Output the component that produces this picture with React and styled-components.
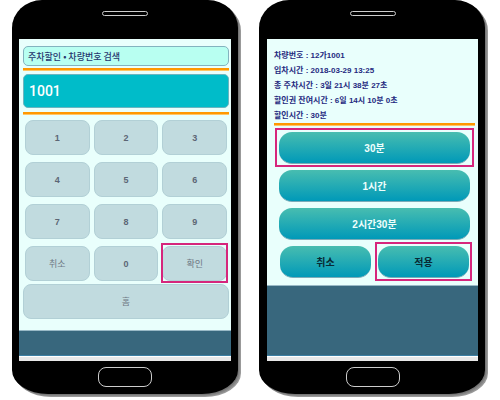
import React, { useState } from "react";
import styled, { createGlobalStyle, css } from "styled-components";

const GlobalStyle = createGlobalStyle`
  *, *::before, *::after { box-sizing: border-box; }
  body {
    margin: 0;
    background: #fff;
    font-family: "Liberation Sans", "Noto Sans CJK KR", sans-serif;
  }
  button, input { font: inherit; margin: 0; }
`;

const Phones = styled.main`
  display: grid;
  grid-template-columns: 1fr 1fr;
  align-items: stretch;
  gap: 21px;
  padding: 0 15px 6px 12px;
`;

const Phone = styled.section`
  display: flex;
  flex-direction: column;
  padding: 0 ${(p) => p.$right}px 0 ${(p) => p.$left}px;
  background: #000;
  border-radius: 30px 30px 36px 36px / 28px 28px 24px 24px;
  box-shadow: 1px 1px 0 #777, 2px 2px 0 #888, 3px 3px 0 #999;
`;

const Bezel = styled.div`
  display: flex;
  justify-content: center;
  align-items: flex-start;
  height: ${(p) => p.$height}px;
  padding: ${(p) => p.$pad};
`;

const Speaker = styled.span`
  width: 46px;
  height: 5px;
  border: 1px solid #ccc;
  border-radius: 3px;
`;

const HomeKey = styled.button`
  width: 54px;
  height: 20px;
  padding: 0;
  background: #000;
  border: 1px solid #ccc;
  border-radius: 8px;
`;

const Screen = styled.div`
  display: flex;
  flex: 1;
  flex-direction: column;
  background: #e9fffc;
`;

const Content = styled.div`
  display: flex;
  flex-direction: column;
  padding: ${(p) => p.$pad};
`;

const Title = styled.h1`
  margin: 0;
  padding: 0 4px;
  height: 20px;
  font-size: 9px;
  line-height: 19px;
  font-weight: 500;
  font-family: "Noto Sans CJK KR", sans-serif;
  color: #27366e;
  background: #b8fff1;
  border: 1px solid #83b3bf;
  border-radius: 5px;
  white-space: nowrap;
`;

const Rule = styled.hr`
  width: 100%;
  height: 3px;
  margin: ${(p) => p.$margin};
  border: 0;
  background: #ff9800;
  border-bottom: 1px solid #ffc565;
`;

const Display = styled.input`
  width: 100%;
  height: 34px;
  padding: 0 5px;
  color: #fff;
  font-family: Roboto, sans-serif;
  font-size: 14px;
  font-weight: 500;
  background: #00bcc9;
  border: 1px solid #6ab5c0;
  border-radius: 5px;
`;

const marker = css`
  position: relative;
  &::after {
    content: "";
    position: absolute;
    inset: ${(p) => p.$mark};
    border: 2px solid #d6267c;
    pointer-events: none;
  }
`;

const Keypad = styled.div`
  display: grid;
  grid-template-columns: repeat(3, 1fr);
  gap: 7px 4px;
  padding: 0 2px;
`;

const Key = styled.button`
  height: 35px;
  padding: 0;
  color: ${(p) => (p.$word ? "#6f7984" : "#5c6675")};
  font-size: 9px;
  font-weight: ${(p) => (p.$word ? 400 : 700)};
  background: #c1dbdf;
  border: 1px solid #b2d0d6;
  border-radius: 8px;
  ${(p) => p.$mark && marker}
`;

const HomeButton = styled(Key)`
  margin-top: 3px;
`;

const Details = styled.ul`
  margin: 0;
  padding: 0;
  list-style: none;
  color: #252a80;
  font-family: "Liberation Sans Narrow", "Liberation Sans", "Noto Sans CJK KR", sans-serif;
  font-size: 8px;
  font-weight: 700;
  line-height: 15px;
  white-space: nowrap;
`;

const Choices = styled.div`
  display: flex;
  flex-direction: column;
  gap: 6px;
  padding: 0 5px;
`;

const Actions = styled.div`
  display: grid;
  grid-template-columns: 1fr 1fr;
  gap: 7px;
  padding: 0 1px;
`;

const Pill = styled.button`
  height: 32px;
  padding: 0;
  color: ${(p) => (p.$dark ? "#082a35" : "#effffd")};
  font-size: 10px;
  font-weight: 700;
  background: linear-gradient(#48bdb0, #0099b8);
  border: 0;
  border-bottom: 1px solid #7aabb8;
  border-radius: 13px;
  ${(p) => p.$mark && marker}
`;

const Footer = styled.footer`
  flex: 1;
  min-height: 26px;
  background: #38677d;
  border-top: 1px solid #99b9c6;
  border-bottom: 1px solid #3d80a4;
`;

const Strip = styled.div`
  height: 5px;
  background: #e8e8e8;
  border-top: 1px solid #fff;
`;

const digits = ["1", "2", "3", "4", "5", "6", "7", "8", "9"];
const details = [
  "차량번호 : 12가1001",
  "입차시간 : 2018-03-29 13:25",
  "총 주차시간 : 3일 21시 38분 27초",
  "할인권 잔여시간 : 6일 14시 10분 0초",
  "할인시간 : 30분",
];

function Device({ label, left, right, children }) {
  return (
    <Phone aria-label={label} $left={left} $right={right}>
      <Bezel $height={39} $pad="11px 0 0">
        <Speaker />
      </Bezel>
      <Screen>
        {children}
        <Footer />
        <Strip />
      </Screen>
      <Bezel $height={33} $pad="6px 0 0">
        <HomeKey aria-label="홈" />
      </Bezel>
    </Phone>
  );
}

export default function App() {
  const [number, setNumber] = useState("1001");
  return (
    <>
      <GlobalStyle />
      <Phones>
        <Device label="차량번호 검색" left={7} right={7}>
          <Content $pad="7px 2px 11px 4px">
            <Title>주차할인 • 차량번호 검색</Title>
            <Rule $margin="2px 0 3px" />
            <Display
              aria-label="차량번호"
              value={number}
              onChange={(e) => setNumber(e.target.value)}
            />
            <Rule $margin="4px 0 5px" />
            <Keypad>
              {digits.map((d) => (
                <Key key={d} onClick={() => setNumber(number + d)}>{d}</Key>
              ))}
              <Key $word onClick={() => setNumber("")}>취소</Key>
              <Key onClick={() => setNumber(number + "0")}>0</Key>
              <Key $word $mark="-4px -2px -3px -2px">확인</Key>
            </Keypad>
            <HomeButton $word>홈</HomeButton>
          </Content>
        </Device>
        <Device label="할인 적용" left={8} right={7}>
          <Content $pad="9px 3px 7px 7px">
            <Details>
              {details.map((line) => (
                <li key={line}>{line}</li>
              ))}
            </Details>
            <Rule $margin="0 0 6px" />
            <Choices>
              <Pill $mark="-4px -4px -4px -4px">30분</Pill>
              <Pill>1시간</Pill>
              <Pill>2시간30분</Pill>
              <Actions>
                <Pill $dark>취소</Pill>
                <Pill $dark $mark="-4px -3px -4px -3px">적용</Pill>
              </Actions>
            </Choices>
          </Content>
        </Device>
      </Phones>
    </>
  );
}
